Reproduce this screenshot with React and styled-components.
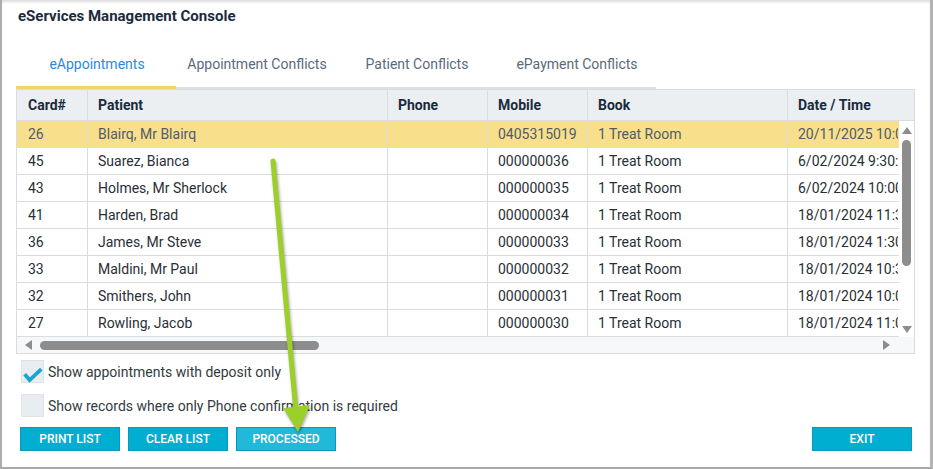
import React from "react";
import styled, { createGlobalStyle } from "styled-components";

const GlobalStyle = createGlobalStyle`
  html, body {
    margin: 0;
    padding: 0;
    background: #ffffff;
  }
  body {
    font-family: Roboto, "Liberation Sans", Arial, sans-serif;
  }
`;

const colors = {
  navy: "#1b2b3d",
  tabText: "#5a6a7c",
  tabActive: "#2b8be0",
  tabLine: "#dde1e4",
  yellow: "#f5d568",
  rowYellow: "#f8df8c",
  headerBg: "#ebeff2",
  grid: "#d9dde0",
  text: "#2a2f36",
  btn: "#00aed2",
  btnBorder: "#0b98b9",
  btnLight: "#20b9da",
  scroll: "#8d8d8d",
};

const Window = styled.div`
  position: relative;
  box-sizing: border-box;
  width: 933px;
  height: 469px;
  border-left: 2px solid #acacac;
  border-right: 3px solid #b3b3b3;
  border-bottom: 2px solid #a9a9a9;
  box-shadow: inset 0 3px 3px -1px rgba(0, 0, 0, 0.14);
  padding: 0 15px 0 14px;
  display: flex;
  flex-direction: column;
`;

const Title = styled.h1`
  margin: 6px 0 0 2px;
  font-size: 15px;
  line-height: 20px;
  font-weight: 700;
  color: ${colors.navy};
`;

const TabBar = styled.div`
  display: flex;
  margin-top: 14px;
  width: 640px;
  box-shadow: inset 0 -2px 0 ${colors.tabLine};
`;

const Tab = styled.div`
  width: 160px;
  height: 49px;
  padding: 2px 0 0 2px;
  box-sizing: border-box;
  display: flex;
  align-items: center;
  justify-content: center;
  font-size: 14px;
  color: ${(p) => (p.$active ? colors.tabActive : colors.tabText)};
  border-bottom: 3px solid ${(p) => (p.$active ? colors.yellow : "transparent")};
`;

const Table = styled.div`
  border: 1px solid ${colors.grid};
  display: flex;
  flex-direction: column;
  background: #fff;
`;

const cols = "71px 300px 100px 100px 200px 1fr";

const HeaderRow = styled.div`
  display: grid;
  grid-template-columns: ${cols};
  height: 31px;
  background: ${colors.headerBg};
  border-bottom: 1px solid ${colors.grid};
  box-sizing: border-box;
`;

const HeadCell = styled.div`
  display: flex;
  align-items: center;
  padding-left: ${(p) => (p.$first ? 11 : 10)}px;
  font-size: 14px;
  font-weight: 700;
  color: ${colors.navy};
  border-right: 1px solid ${(p) => (p.$last ? "transparent" : colors.grid)};
`;

const BodyWrap = styled.div`
  display: flex;
  height: 216px;
`;

const Rows = styled.div`
  flex: 1;
  overflow: hidden;
`;

const Row = styled.div`
  display: grid;
  grid-template-columns: ${cols};
  height: 27px;
  box-sizing: border-box;
  border-bottom: 1px solid ${colors.grid};
  background: ${(p) => (p.$selected ? colors.rowYellow : "#fff")};
  color: ${(p) => (p.$selected ? "#525c68" : colors.text)};
`;

const Cell = styled.div`
  display: flex;
  align-items: center;
  padding-left: ${(p) => (p.$first ? 11 : 10)}px;
  font-size: 14px;
  white-space: nowrap;
  overflow: hidden;
  border-right: 1px solid ${(p) => (p.$last ? "transparent" : colors.grid)};
`;

const VScroll = styled.div`
  width: 15px;
  display: flex;
  flex-direction: column;
  align-items: center;
  padding: 6px 0 4px;
  box-sizing: border-box;
  background: #fff;
`;

const VThumb = styled.div`
  width: 9px;
  height: 126px;
  margin-top: 6px;
  border-radius: 5px;
  background: ${colors.scroll};
`;

const Arrow = styled.div`
  width: 0;
  height: 0;
  border-style: solid;
  border-color: transparent;
  ${(p) =>
    p.$dir === "up" &&
    `border-width: 0 5px 7px 5px; border-bottom-color: ${colors.scroll};`}
  ${(p) =>
    p.$dir === "down" &&
    `border-width: 7px 5px 0 5px; border-top-color: ${colors.scroll}; margin-top: auto;`}
  ${(p) =>
    p.$dir === "left" &&
    `border-width: 5px 7px 5px 0; border-right-color: ${colors.scroll};`}
  ${(p) =>
    p.$dir === "right" &&
    `border-width: 5px 0 5px 7px; border-left-color: ${colors.scroll}; margin-left: auto;`}
`;

const HScroll = styled.div`
  height: 16px;
  display: flex;
  align-items: center;
  padding: 0 24px 0 8px;
  background: #f7f8f9;
`;

const HThumb = styled.div`
  width: 279px;
  height: 9px;
  margin-left: 8px;
  border-radius: 5px;
  background: ${colors.scroll};
`;

const Options = styled.div`
  display: flex;
  flex-direction: column;
  gap: 11px;
  margin: 6px 0 0 5px;
`;

const CheckRow = styled.label`
  display: flex;
  align-items: center;
  gap: 4px;
  font-size: 14px;
  color: #333a42;
`;

const Box = styled.span`
  width: 23px;
  height: 23px;
  box-sizing: border-box;
  background: #e9edf1;
  border: 1px solid #dfe3e7;
  display: flex;
  align-items: flex-end;
  justify-content: center;
`;

const Buttons = styled.div`
  display: flex;
  gap: 8px;
  margin: 10px 3px 0 4px;
`;

const Button = styled.button`
  width: 100px;
  height: 24px;
  box-sizing: border-box;
  background: ${(p) => (p.$light ? colors.btnLight : colors.btn)};
  border: 1px solid ${colors.btnBorder};
  color: #fff;
  font-family: Roboto, "Liberation Sans", Arial, sans-serif;
  font-size: 12px;
  font-weight: 500;
  text-transform: uppercase;
  padding: 0;
  ${(p) => p.$push && "margin-left: auto;"}
`;

const Overlay = styled.svg`
  position: absolute;
  left: -2px;
  top: 0;
  pointer-events: none;
  filter: drop-shadow(1px 2px 1.5px rgba(0, 0, 0, 0.35));
`;

const rows = [
  ["26", "Blairq, Mr Blairq", "", "0405315019", "1 Treat Room", "20/11/2025 10:00:00 AM"],
  ["45", "Suarez, Bianca", "", "000000036", "1 Treat Room", "6/02/2024 9:30:00 AM"],
  ["43", "Holmes, Mr Sherlock", "", "000000035", "1 Treat Room", "6/02/2024 10:00:00 AM"],
  ["41", "Harden, Brad", "", "000000034", "1 Treat Room", "18/01/2024 11:30:00 AM"],
  ["36", "James, Mr Steve", "", "000000033", "1 Treat Room", "18/01/2024 1:30:00 PM"],
  ["33", "Maldini, Mr Paul", "", "000000032", "1 Treat Room", "18/01/2024 10:30:00 AM"],
  ["32", "Smithers, John", "", "000000031", "1 Treat Room", "18/01/2024 10:00:00 AM"],
  ["27", "Rowling, Jacob", "", "000000030", "1 Treat Room", "18/01/2024 11:00:00 AM"],
];

const headers = ["Card#", "Patient", "Phone", "Mobile", "Book", "Date / Time"];
const tabs = ["eAppointments", "Appointment Conflicts", "Patient Conflicts", "ePayment Conflicts"];

const CheckMark = () => (
  <svg width="24" height="16" viewBox="0 0 24 16" style={{ marginBottom: -1, marginLeft: 1 }}>
    <path d="M2 7 L8 14 L22 1" fill="none" stroke="#1aa5d1" strokeWidth="4.5" />
  </svg>
);

const App = () => {
  return (
    <>
      <GlobalStyle />
      <Window>
        <Title>eServices Management Console</Title>
        <TabBar>
          {tabs.map((t, i) => (
            <Tab key={t} $active={i === 0}>{t}</Tab>
          ))}
        </TabBar>
        <Table>
          <HeaderRow>
            {headers.map((h, i) => (
              <HeadCell key={h} $first={i === 0} $last={i === headers.length - 1}>{h}</HeadCell>
            ))}
          </HeaderRow>
          <BodyWrap>
            <Rows>
              {rows.map((r, i) => (
                <Row key={r[0]} $selected={i === 0}>
                  {r.map((c, j) => (
                    <Cell key={j} $first={j === 0} $last={j === r.length - 1}>{c}</Cell>
                  ))}
                </Row>
              ))}
            </Rows>
            <VScroll>
              <Arrow $dir="up" />
              <VThumb />
              <Arrow $dir="down" />
            </VScroll>
          </BodyWrap>
          <HScroll>
            <Arrow $dir="left" />
            <HThumb />
            <Arrow $dir="right" />
          </HScroll>
        </Table>
        <Options>
          <CheckRow>
            <Box><CheckMark /></Box>
            Show appointments with deposit only
          </CheckRow>
          <CheckRow>
            <Box />
            Show records where only Phone confirmation is required
          </CheckRow>
        </Options>
        <Buttons>
          <Button>Print List</Button>
          <Button>Clear List</Button>
          <Button $light>Processed</Button>
          <Button $push>Exit</Button>
        </Buttons>
        <Overlay width="933" height="469" viewBox="0 0 933 469">
          <line x1="273" y1="161" x2="296" y2="412" stroke="#9ccf2a" strokeWidth="5" strokeLinecap="round" />
          <polygon points="283,408 310,405 298,432" fill="#9ccf2a" />
        </Overlay>
      </Window>
    </>
  );
};

export default App;
